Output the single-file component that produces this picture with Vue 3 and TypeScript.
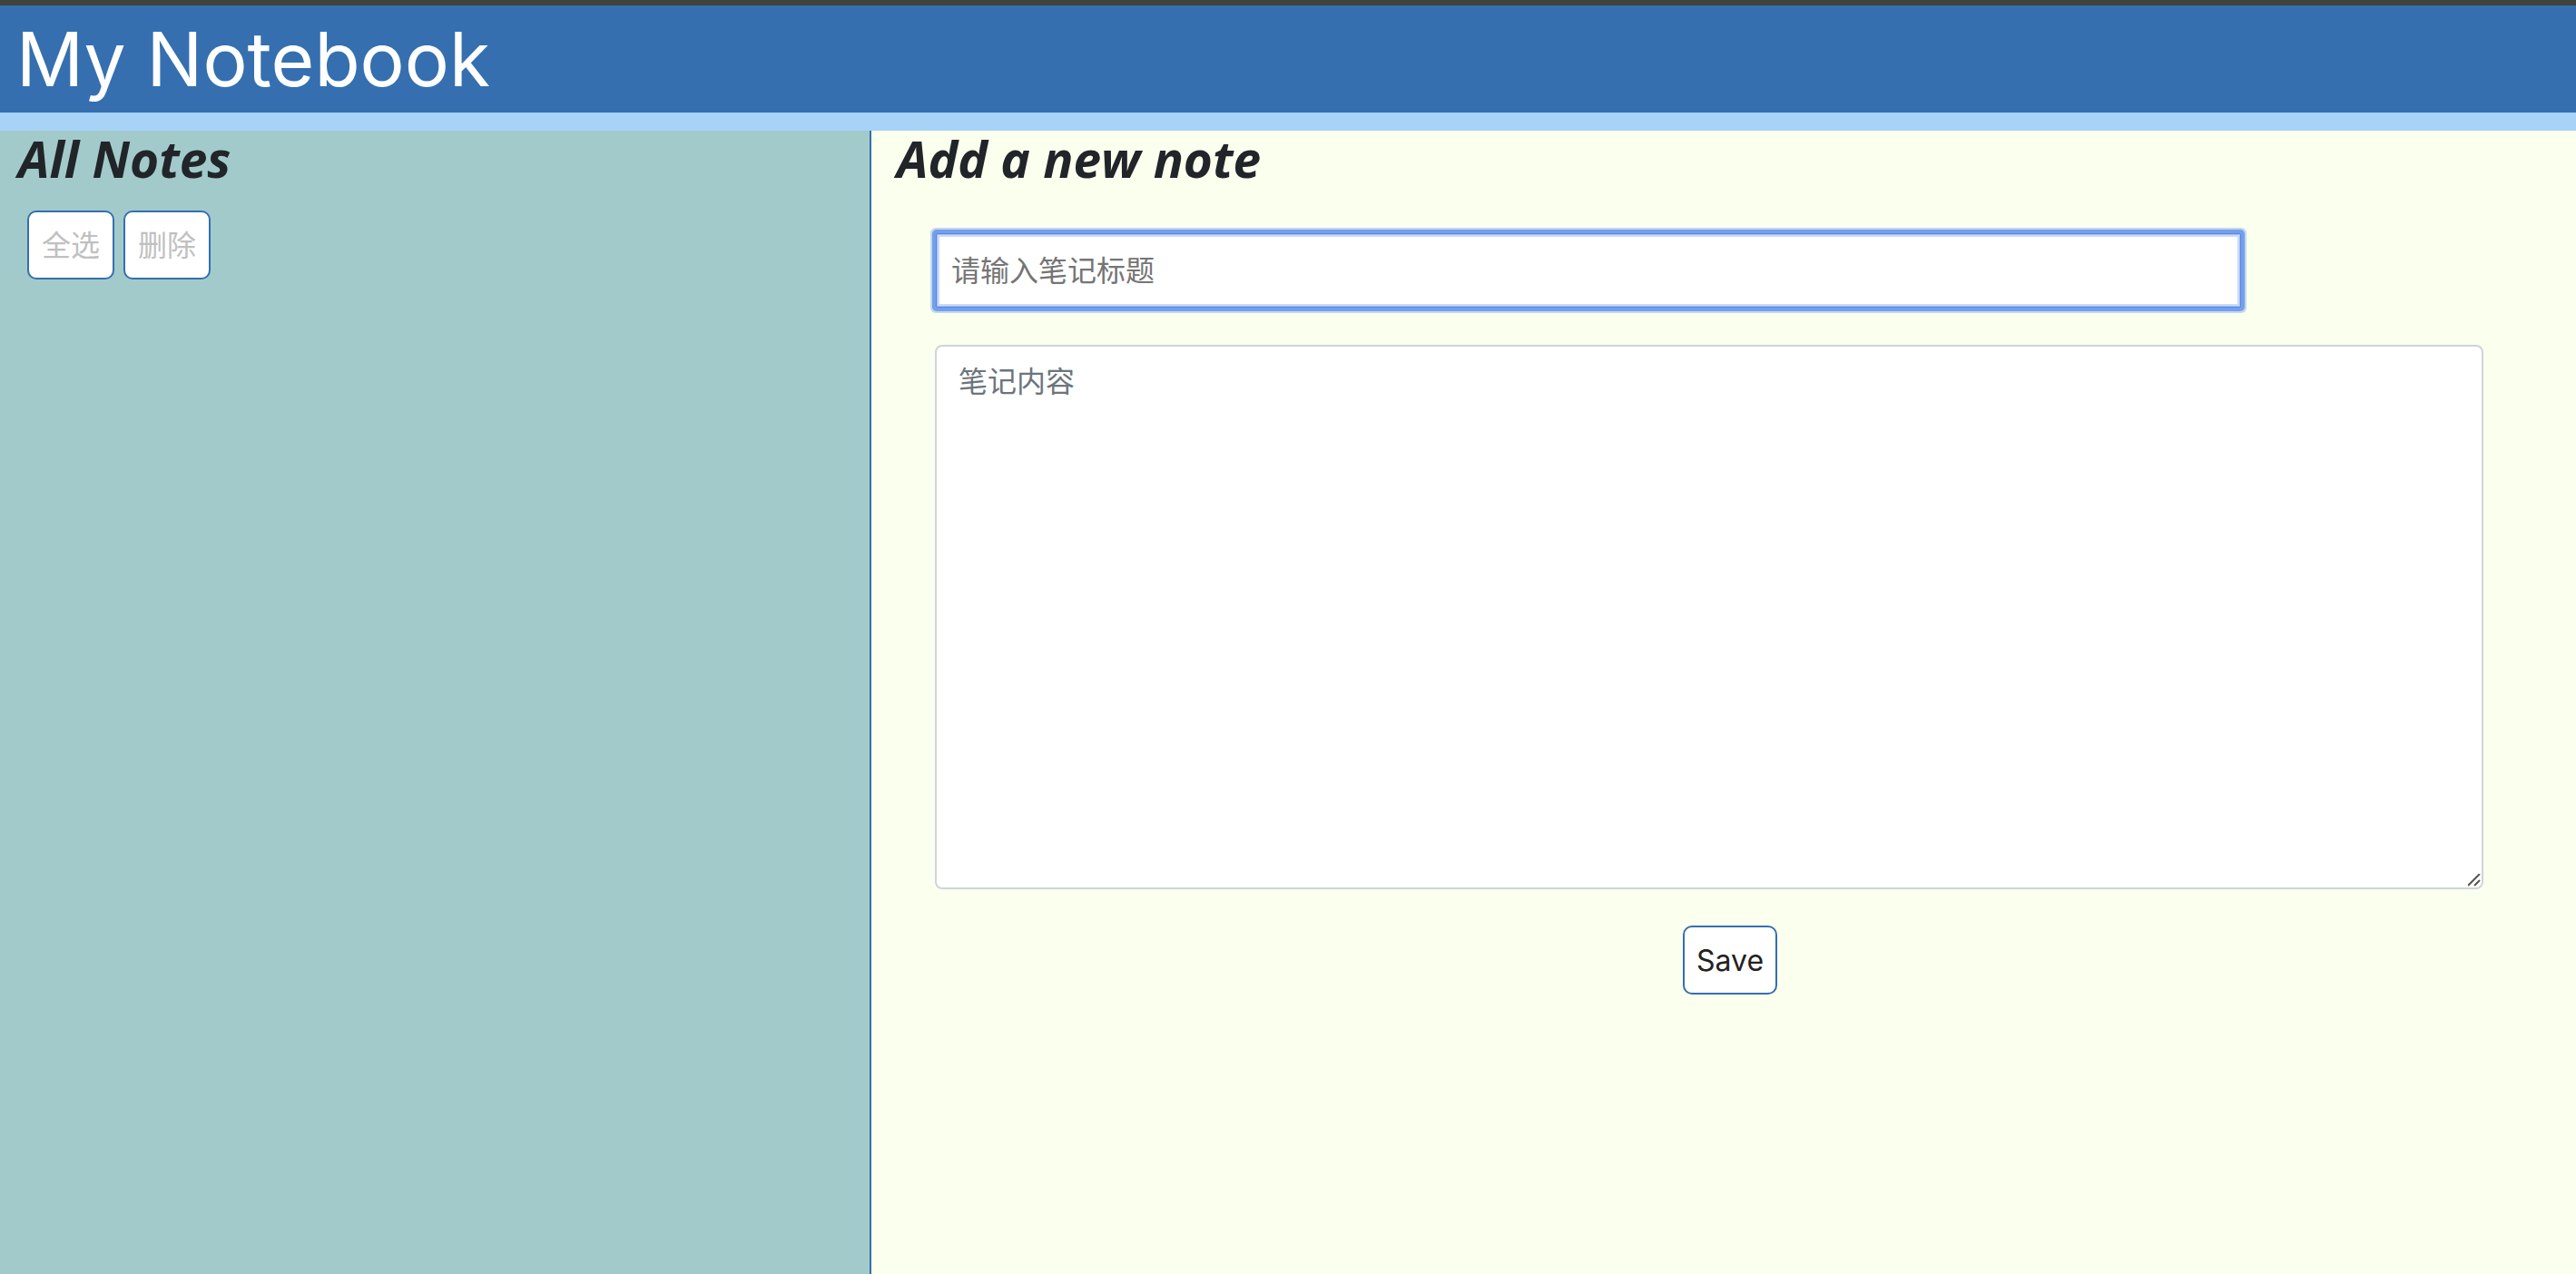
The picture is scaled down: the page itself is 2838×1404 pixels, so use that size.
<script setup lang="ts">
import { onMounted, ref } from 'vue'

const title = ref('')
const content = ref('')
const titleInput = ref<HTMLInputElement | null>(null)

onMounted(() => titleInput.value?.focus())
</script>

<template>
  <div class="app">
    <header class="header">
      <h1>My Notebook</h1>
    </header>
    <div class="body">
      <aside class="sidebar">
        <h2>All Notes</h2>
        <div class="actions">
          <button type="button" class="btn" disabled>全选</button>
          <button type="button" class="btn" disabled>删除</button>
        </div>
      </aside>
      <main class="editor">
        <h2>Add a new note</h2>
        <form class="form" @submit.prevent>
          <input ref="titleInput" v-model="title" class="title" type="text" aria-label="请输入笔记标题" placeholder="请输入笔记标题" />
          <textarea v-model="content" class="content" aria-label="笔记内容" placeholder="笔记内容"></textarea>
          <button type="submit" class="btn save">Save</button>
        </form>
      </main>
    </div>
  </div>
</template>

<style>
body {
  margin: 0;
}
</style>

<style scoped>
.app {
  display: flex;
  flex-direction: column;
  min-height: 100vh;
  box-sizing: border-box;
  border-top: 6px solid #40423b;
  font-family: Inter, "Noto Sans CJK SC", sans-serif;
  color: #212529;
}

.header {
  padding: 10px 18px 8px;
  background: #356fb0;
  border-bottom: 20px solid #a8d3f6;
}

h1 {
  margin: 0;
  font-size: 82px;
  line-height: 100px;
  font-weight: 400;
  color: #fff;
}

.body {
  display: flex;
  flex: 1;
}

.sidebar {
  width: 960px;
  flex: 0 0 auto;
  box-sizing: border-box;
  border-right: 2px solid #356fb0;
  background: #a2caca;
}

h2 {
  margin: 0;
  padding-bottom: 6px;
  font-family: "Bradley Hand", "Open Sans", cursive;
  font-size: 55px;
  line-height: 62px;
  font-weight: 700;
  font-style: italic;
}

.sidebar h2 {
  padding-left: 20px;
}

.actions {
  display: flex;
  gap: 10px;
  padding: 20px 30px;
}

.btn {
  height: 76px;
  padding: 2px 14px 0;
  border: 2px solid #356fb0;
  border-radius: 10px;
  background: #fff;
  font-family: inherit;
  font-size: 32px;
  line-height: 48px;
  color: #222;
}

.btn:disabled {
  color: #c0c0c0;
}

.editor {
  flex: 1;
  background: #fbffee;
}

.editor h2 {
  padding-left: 28px;
}

.form {
  display: flex;
  flex-direction: column;
  align-items: flex-start;
  padding: 44px 102px 40px 70px;
}

.title {
  width: 84.4%;
  height: 84px;
  box-sizing: border-box;
  padding: 0 17px;
  border: 1px solid #759fec;
  border-radius: 2px;
  outline: none;
  box-shadow: 0 0 0 3px #759fec, 0 0 0 5px #c3d8ee, inset 0 0 0 1px #5a86dd, inset 0 0 0 2px #a3c0f3, inset 0 0 0 4px #c9daf9;
  background: #fff;
  font-family: inherit;
  font-size: 32px;
}

.title::placeholder {
  color: #757575;
}

.content {
  width: 100%;
  height: 600px;
  margin: 40px 0;
  box-sizing: border-box;
  padding: 15px 24px;
  border: 2px solid #ced4da;
  border-radius: 8px;
  background: #fff;
  font-family: inherit;
  font-size: 32px;
  line-height: 48px;
}

.content::placeholder {
  color: #6c757d;
}

.content::-webkit-resizer {
  background: url("data:image/svg+xml,%3Csvg xmlns='http://www.w3.org/2000/svg' width='15' height='15'%3E%3Cpath d='M0 13L13 0M7 13L13 7' stroke='%23555' stroke-width='2' fill='none'/%3E%3C/svg%3E") no-repeat;
}

.save {
  margin-left: 824px;
  padding: 2px 13px 0;
}
</style>
